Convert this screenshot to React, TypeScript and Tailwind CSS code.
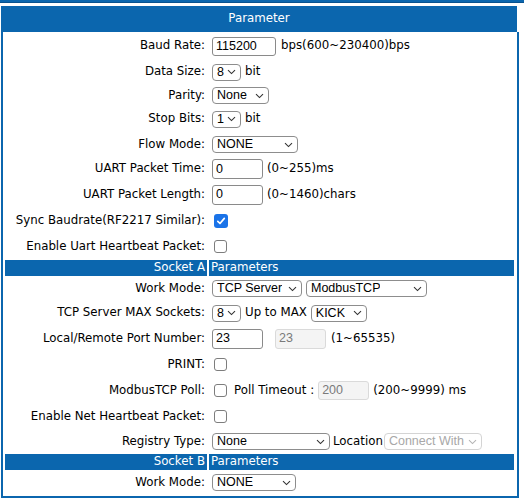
import React from 'react';

const BLUE = 'bg-[#0b66ae]';

function Chevron({ muted }: { muted?: boolean }) {
  return (
    <svg width="9" height="6" viewBox="0 0 9 6" className="shrink-0">
      <path d="M1 1.2 L4.5 4.6 L8 1.2" fill="none" stroke={muted ? '#b5b5b5' : '#333'} strokeWidth="1.1" />
    </svg>
  );
}

function Select({ value, w, disabled }: { value: string; w: number; disabled?: boolean }) {
  return (
    <div
      style={{ width: w }}
      className={`h-[17px] flex items-center justify-between rounded-[4px] border pl-[4px] pr-[4px] font-['Liberation_Sans',Arial,sans-serif] text-[12.5px] leading-none ${
        disabled ? 'border-[#d4d4d4] text-[#a8a8a8]' : 'border-[#8d8d8d] text-black'
      } bg-white`}
    >
      <span className="whitespace-nowrap overflow-hidden">{value}</span>
      <Chevron muted={disabled} />
    </div>
  );
}

function TextInput({ value, w, h = 20, disabled }: { value: string; w: number; h?: number; disabled?: boolean }) {
  return (
    <div
      style={{ width: w, height: h }}
      className={`flex items-center rounded-[3px] border px-[3px] font-['Liberation_Sans',Arial,sans-serif] text-[12.5px] leading-none ${
        disabled ? 'border-[#dadada] bg-[#f4f4f4] text-[#7a7a7a]' : 'border-[#8a8a8a] bg-white text-black'
      }`}
    >
      {value}
    </div>
  );
}

function Checkbox({ checked }: { checked?: boolean }) {
  if (checked) {
    return (
      <div className="ml-[2px] w-[14px] h-[14px] rounded-[3px] bg-[#1a73e8] flex items-center justify-center">
        <svg width="10" height="10" viewBox="0 0 10 10">
          <path d="M1.8 5.3 L4 7.5 L8.3 2.4" fill="none" stroke="white" strokeWidth="1.7" strokeLinecap="round" strokeLinejoin="round" />
        </svg>
      </div>
    );
  }
  return <div className="ml-[2px] w-[13px] h-[13px] rounded-[3px] border border-[#7d7d7d] bg-white" />;
}

function Row({ label, h, children }: { label: string; h: number; children?: React.ReactNode }) {
  return (
    <div style={{ height: h }} className="flex gap-[2px]">
      <div className="w-[202px] shrink-0 flex items-center justify-end pr-[2px] whitespace-nowrap">{label}</div>
      <div className="flex-1 flex items-center gap-[4px] pl-[3px] whitespace-nowrap">{children}</div>
    </div>
  );
}

function SectionBar({ left }: { left: string }) {
  return (
    <div className="h-[16px] flex gap-[2px] text-white my-[1px]">
      <div className={`w-[202px] shrink-0 ${BLUE} flex items-center justify-end pr-[2px]`}>{left}</div>
      <div className={`flex-1 ${BLUE} flex items-center pl-[2px]`}>Parameters</div>
    </div>
  );
}

export default function App() {
  return (
    <div className="w-[524px] h-[500px] bg-white font-['DejaVu_Sans',Verdana,sans-serif] text-[11.8px] text-black overflow-hidden">
      <div className={`h-[3px] ${BLUE} border-b border-[#07528f]`} />
      <div className="h-[3px]" />
      <div className={`ml-[1px] w-[516px] h-[26px] ${BLUE} text-white flex items-center justify-center`}>Parameter</div>
      <div className="ml-[1px] w-[518px] border-x-2 border-b-2 border-[#0b66ae] pt-[1px] pb-[2px] pl-[2px] pr-[3px]">
        <Row label="Baud Rate:" h={26}>
          <TextInput value="115200" w={64} h={19} />
          <span className="ml-[1px]">bps(600~230400)bps</span>
        </Row>
        <Row label="Data Size:" h={26}>
          <Select value="8" w={29} />
          <span>bit</span>
        </Row>
        <Row label="Parity:" h={21}>
          <Select value="None" w={57} />
        </Row>
        <Row label="Stop Bits:" h={26}>
          <Select value="1" w={29} />
          <span>bit</span>
        </Row>
        <Row label="Flow Mode:" h={25}>
          <Select value="NONE" w={86} />
        </Row>
        <Row label="UART Packet Time:" h={24}>
          <TextInput value="0" w={51} />
          <span>(0~255)ms</span>
        </Row>
        <Row label="UART Packet Length:" h={27}>
          <TextInput value="0" w={51} />
          <span>(0~1460)chars</span>
        </Row>
        <Row label="Sync Baudrate(RF2217 Similar):" h={26}>
          <Checkbox checked />
        </Row>
        <Row label="Enable Uart Heartbeat Packet:" h={25}>
          <Checkbox />
        </Row>
        <SectionBar left="Socket A" />
        <Row label="Work Mode:" h={23}>
          <Select value="TCP Server" w={90} />
          <Select value="ModbusTCP" w={121} />
        </Row>
        <Row label="TCP Server MAX Sockets:" h={26}>
          <Select value="8" w={29} />
          <span>Up to MAX</span>
          <Select value="KICK" w={56} />
        </Row>
        <Row label="Local/Remote Port Number:" h={25}>
          <TextInput value="23" w={51} />
          <div className="w-[4px]" />
          <TextInput value="23" w={51} disabled />
          <span className="ml-[1px]">(1~65535)</span>
        </Row>
        <Row label="PRINT:" h={27}>
          <Checkbox />
        </Row>
        <Row label="ModbusTCP Poll:" h={25}>
          <Checkbox />
          <span className="ml-[3px]">Poll Timeout :</span>
          <TextInput value="200" w={51} h={19} disabled />
          <span>(200~9999) ms</span>
        </Row>
        <Row label="Enable Net Heartbeat Packet:" h={27}>
          <Checkbox />
        </Row>
        <Row label="Registry Type:" h={23}>
          <Select value="None" w={118} />
          <span className="-ml-[1px]">Location</span>
          <div className="-ml-[3px]">
            <Select value="Connect With" w={98} disabled />
          </div>
        </Row>
        <SectionBar left="Socket B" />
        <Row label="Work Mode:" h={23}>
          <Select value="NONE" w={84} />
        </Row>
      </div>
    </div>
  );
}
